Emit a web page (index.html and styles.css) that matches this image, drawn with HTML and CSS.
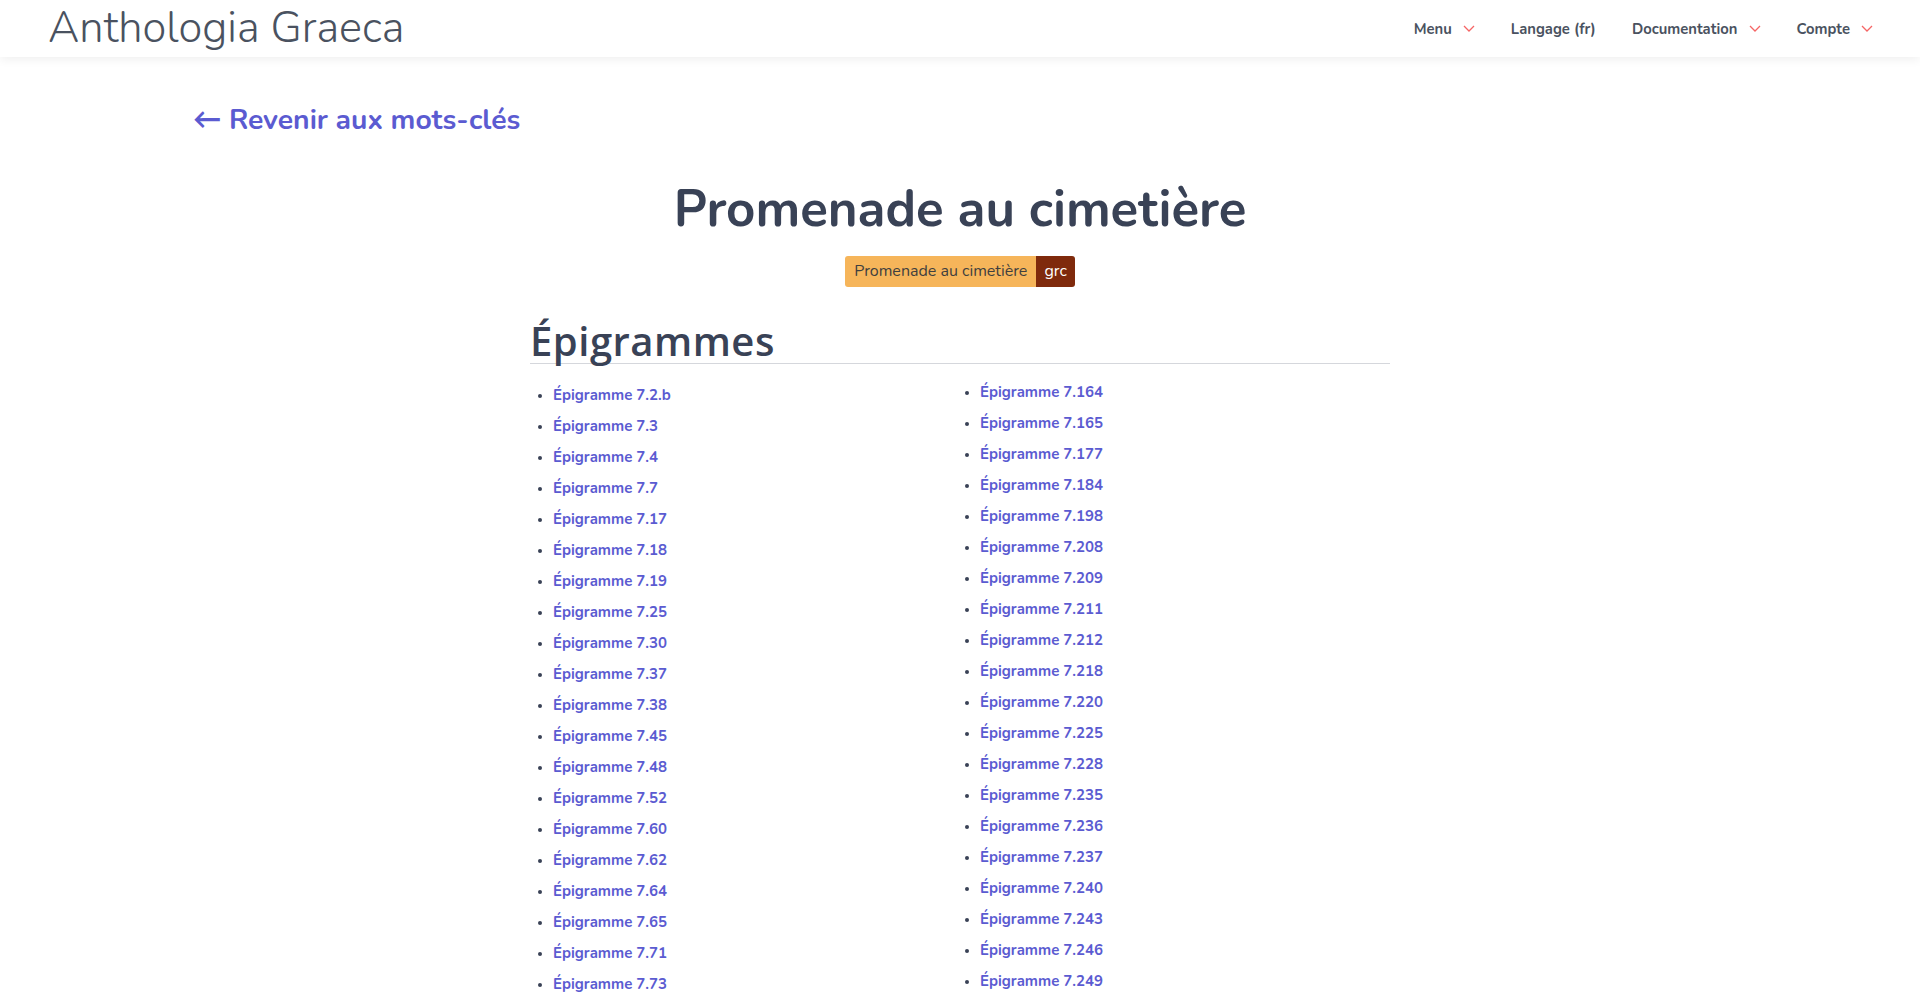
FILE: index.html
```html
<!DOCTYPE html>
<html lang="fr">
<head>
<meta charset="utf-8">
<title>Anthologia Graeca</title>
<link rel="stylesheet" href="styles.css">
</head>
<body>
<header class="topbar">
  <a class="brand" href="#">Anthologia Graeca</a>
  <nav class="nav">
    <a class="nav-item" href="#">Menu <svg class="chev" viewBox="0 0 12 7"><polyline points="1,1 6,6 11,1"/></svg></a>
    <a class="nav-item" href="#">Langage (fr)</a>
    <a class="nav-item" href="#">Documentation <svg class="chev" viewBox="0 0 12 7"><polyline points="1,1 6,6 11,1"/></svg></a>
    <a class="nav-item" href="#">Compte <svg class="chev" viewBox="0 0 12 7"><polyline points="1,1 6,6 11,1"/></svg></a>
  </nav>
</header>
<main class="page">
  <a class="back" href="#">← Revenir aux mots-clés</a>
  <h1 class="title">Promenade au cimetière</h1>
  <div class="badge-row">
    <span class="badge"><span class="badge-text">Promenade au cimetière</span><span class="badge-lang">grc</span></span>
  </div>
  <section class="section">
    <h2 class="section-title">Épigrammes</h2>
    <div class="cols">
      <ul class="list list-left">
        <li><a href="#">Épigramme 7.2.b</a></li>
        <li><a href="#">Épigramme 7.3</a></li>
        <li><a href="#">Épigramme 7.4</a></li>
        <li><a href="#">Épigramme 7.7</a></li>
        <li><a href="#">Épigramme 7.17</a></li>
        <li><a href="#">Épigramme 7.18</a></li>
        <li><a href="#">Épigramme 7.19</a></li>
        <li><a href="#">Épigramme 7.25</a></li>
        <li><a href="#">Épigramme 7.30</a></li>
        <li><a href="#">Épigramme 7.37</a></li>
        <li><a href="#">Épigramme 7.38</a></li>
        <li><a href="#">Épigramme 7.45</a></li>
        <li><a href="#">Épigramme 7.48</a></li>
        <li><a href="#">Épigramme 7.52</a></li>
        <li><a href="#">Épigramme 7.60</a></li>
        <li><a href="#">Épigramme 7.62</a></li>
        <li><a href="#">Épigramme 7.64</a></li>
        <li><a href="#">Épigramme 7.65</a></li>
        <li><a href="#">Épigramme 7.71</a></li>
        <li><a href="#">Épigramme 7.73</a></li>
        <li><a href="#">Épigramme 7.77</a></li>
        <li><a href="#">Épigramme 7.80</a></li>
      </ul>
      <ul class="list list-right">
        <li><a href="#">Épigramme 7.164</a></li>
        <li><a href="#">Épigramme 7.165</a></li>
        <li><a href="#">Épigramme 7.177</a></li>
        <li><a href="#">Épigramme 7.184</a></li>
        <li><a href="#">Épigramme 7.198</a></li>
        <li><a href="#">Épigramme 7.208</a></li>
        <li><a href="#">Épigramme 7.209</a></li>
        <li><a href="#">Épigramme 7.211</a></li>
        <li><a href="#">Épigramme 7.212</a></li>
        <li><a href="#">Épigramme 7.218</a></li>
        <li><a href="#">Épigramme 7.220</a></li>
        <li><a href="#">Épigramme 7.225</a></li>
        <li><a href="#">Épigramme 7.228</a></li>
        <li><a href="#">Épigramme 7.235</a></li>
        <li><a href="#">Épigramme 7.236</a></li>
        <li><a href="#">Épigramme 7.237</a></li>
        <li><a href="#">Épigramme 7.240</a></li>
        <li><a href="#">Épigramme 7.243</a></li>
        <li><a href="#">Épigramme 7.246</a></li>
        <li><a href="#">Épigramme 7.249</a></li>
        <li><a href="#">Épigramme 7.250</a></li>
        <li><a href="#">Épigramme 7.252</a></li>
      </ul>
    </div>
  </section>
</main>
</body>
</html>
```
FILE: styles.css
```css
* { box-sizing: border-box; }
html, body { margin: 0; padding: 0; }
body {
  font-family: "Nunito", "Lato", "Open Sans", sans-serif;
  color: #394256;
  background: #fff;
}
a { text-decoration: none; }

.topbar {
  height: 57px;
  display: flex;
  align-items: center;
  justify-content: space-between;
  padding: 0 47px 0 48px;
  background: #fff;
  box-shadow: 0 2px 10px rgba(0, 0, 0, 0.07);
  position: relative;
}
.brand {
  font-size: 43.4px;
  font-weight: 300;
  color: #4a5260;
  line-height: 50px;
  margin-top: -1px;
}
.nav {
  display: flex;
  align-items: center;
  gap: 36px;
}
.nav-item {
  display: flex;
  align-items: center;
  font-size: 14.8px;
  font-weight: 700;
  color: #4a5260;
}
.chev {
  width: 12px;
  height: 7px;
  margin-left: 11px;
  fill: none;
  stroke: #f56565;
  stroke-width: 1.3;
}

.page {
  max-width: 1534px;
  margin: 0 auto;
  padding-top: 45px;
}
.back {
  display: inline-block;
  font-size: 28.3px;
  font-weight: 700;
  line-height: 36px;
  color: #5b5bd1;
}
.title {
  margin: 43px 0 0;
  text-align: center;
  font-size: 51px;
  font-weight: 700;
  line-height: 56px;
  color: #394256;
}
.badge-row {
  display: flex;
  justify-content: center;
  margin-top: 19px;
}
.badge {
  display: inline-flex;
  height: 31px;
  border-radius: 3px;
  overflow: hidden;
  font-size: 16px;
  line-height: 31px;
}
.badge-text {
  background: #f6b55a;
  color: #3f3f3f;
  padding: 0 9px 0 9px;
}
.badge-lang {
  background: #7f2a0c;
  color: #fff;
  padding: 0 8px;
}

.section {
  width: 860px;
  margin: 31px auto 0;
}
.section-title {
  margin: 0;
  font-family: "Open Sans", "Lato", sans-serif;
  font-size: 40px;
  font-weight: 600;
  letter-spacing: 0.5px;
  line-height: 45px;
  color: #394256;
  border-bottom: 1px solid #d5d7dc;
}
.cols {
  display: grid;
  grid-template-columns: 1fr 1fr;
  margin-top: 13px;
}
.list {
  margin: 0;
  padding: 0 0 0 23px;
  list-style: disc;
  color: #394256;
}
.list-left { padding-top: 3px; }
.list-right { padding-left: 20px; }
.list li {
  height: 31px;
  line-height: 31px;
  font-size: 15px;
}
.list li::marker { font-size: 13px; }
.list a {
  font-weight: 700;
  color: #5b5bd1;
}
```
